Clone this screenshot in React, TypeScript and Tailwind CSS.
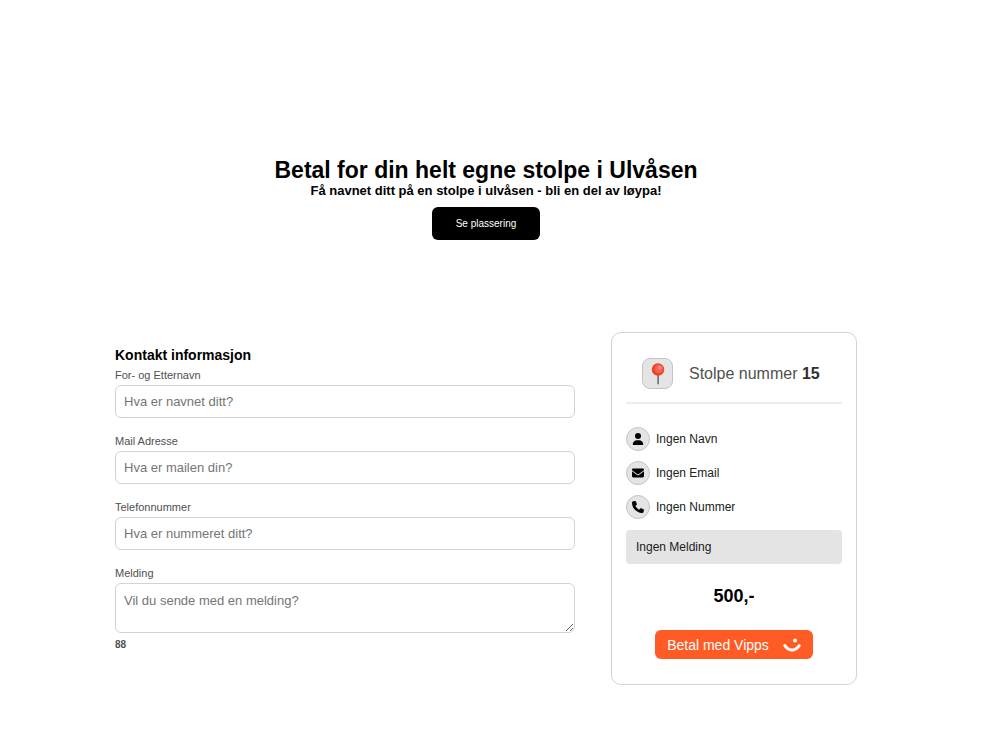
import { useState } from "react"
import { FaEnvelope, FaPhone, FaUser } from "react-icons/fa6"

const MAX_LENGTH = 88

const fieldClass =
  "block w-full rounded-md border border-[#d3d3d3] bg-white px-2 text-[13px] text-black placeholder:text-[#757575] outline-none focus:border-gray-500"

function Field({ id, label, type, placeholder, value, onChange }: {
  id: string
  label: string
  type: string
  placeholder: string
  value: string
  onChange: (value: string) => void
}) {
  return (
    <div className="mb-[13px]">
      <label htmlFor={id} className="block text-[11px] leading-5 text-[#505050]">{label}</label>
      <input
        id={id}
        type={type}
        placeholder={placeholder}
        value={value}
        onChange={(e) => onChange(e.target.value)}
        className={`${fieldClass} h-[33px]`}
      />
    </div>
  )
}

function InfoRow({ icon, text }: { icon: React.ReactNode; text: string }) {
  return (
    <li className="flex items-center gap-1.5">
      <span className="flex size-6 shrink-0 items-center justify-center rounded-full border border-[#c4c4c4] bg-[#e4e4e4] text-xs text-black">
        {icon}
      </span>
      <span className="truncate">{text}</span>
    </li>
  )
}

function Pin() {
  return (
    <svg viewBox="0 0 20 24" className="h-6 w-5" aria-hidden="true">
      <rect x="9.2" y="11" width="1.8" height="11.5" rx="0.9" fill="#737b80" />
      <circle cx="10" cy="7.5" r="6.2" fill="#f23f25" />
      <circle cx="10.8" cy="6.8" r="4.4" fill="#ee6352" />
      <circle cx="11.6" cy="5.8" r="2" fill="#f2897c" />
    </svg>
  )
}

function VippsSmile() {
  return (
    <svg viewBox="0 0 18 14" className="h-3.5 w-[18px]" aria-hidden="true">
      <circle cx="12" cy="2.4" r="2" fill="#fff" />
      <path d="M1.8 7.6C3.6 10.6 5.8 12 8.8 12c3 0 5.2-1.4 7.3-4.2" fill="none" stroke="#fff" strokeWidth="3" strokeLinecap="round" />
    </svg>
  )
}

export default function App() {
  const [name, setName] = useState("")
  const [email, setEmail] = useState("")
  const [phone, setPhone] = useState("")
  const [message, setMessage] = useState("")

  return (
    <main className="bg-white pr-7 pt-[158px] pb-16 font-['Liberation_Sans',Arial,sans-serif] text-black">
      <header className="flex flex-col items-center text-center">
        <h1 className="text-[23px] leading-6 font-bold">Betal for din helt egne stolpe i Ulvåsen</h1>
        <h2 className="text-[13px] leading-[18px] font-bold">Få navnet ditt på en stolpe i ulvåsen - bli en del av løypa!</h2>
        <button type="button" className="mt-[7px] h-[33px] w-[108px] rounded-md bg-black text-[10px] text-white">Se plassering</button>
      </header>

      <div className="mx-auto mt-[92px] flex max-w-[742px] items-start gap-9">
        <form className="flex-1 pt-[13px]">
          <h3 className="text-sm leading-5 font-bold">Kontakt informasjon</h3>
          <Field id="name" label="For- og Etternavn" type="text" placeholder="Hva er navnet ditt?" value={name} onChange={setName} />
          <Field id="email" label="Mail Adresse" type="email" placeholder="Hva er mailen din?" value={email} onChange={setEmail} />
          <Field id="phone" label="Telefonnummer" type="tel" placeholder="Hva er nummeret ditt?" value={phone} onChange={setPhone} />
          <div>
            <label htmlFor="message" className="block text-[11px] leading-5 text-[#505050]">Melding</label>
            <textarea
              id="message"
              placeholder="Vil du sende med en melding?"
              maxLength={MAX_LENGTH}
              value={message}
              onChange={(e) => setMessage(e.target.value)}
              className={`${fieldClass} h-[50px] resize py-[7px]`}
            />
            <p className="mt-1 text-[10px] leading-4 font-bold text-[#505050]">{MAX_LENGTH - message.length}</p>
          </div>
        </form>

        <aside className="w-[246px] rounded-[10px] border border-[#d3d3d3] px-3.5 py-[25px]">
          <div className="flex items-center gap-4 border-b-2 border-[#ececec] px-4 pb-[13px]">
            <span className="flex size-[31px] items-center justify-center rounded-lg border border-[#c4c4c4] bg-[#e4e4e4]">
              <Pin />
            </span>
            <p className="text-base whitespace-nowrap text-[#505050]">Stolpe nummer <b className="text-[#303030]">15</b></p>
          </div>
          <ul className="mt-[23px] flex flex-col gap-2.5 text-xs text-[#202020]">
            <InfoRow icon={<FaUser />} text={name || "Ingen Navn"} />
            <InfoRow icon={<FaEnvelope />} text={email || "Ingen Email"} />
            <InfoRow icon={<FaPhone />} text={phone || "Ingen Nummer"} />
          </ul>
          <p className="mt-[11px] rounded-sm bg-[#e4e4e4] px-2.5 py-[9px] text-xs wrap-break-word text-[#202020]">{message || "Ingen Melding"}</p>
          <p className="mt-5 text-center text-lg leading-6 font-bold">500,-</p>
          <button type="button" className="mx-auto mt-[22px] flex h-[29px] items-center gap-3.5 rounded-md bg-[#ff5b24] px-3 text-sm text-white">
            Betal med Vipps
            <VippsSmile />
          </button>
        </aside>
      </div>
    </main>
  )
}
